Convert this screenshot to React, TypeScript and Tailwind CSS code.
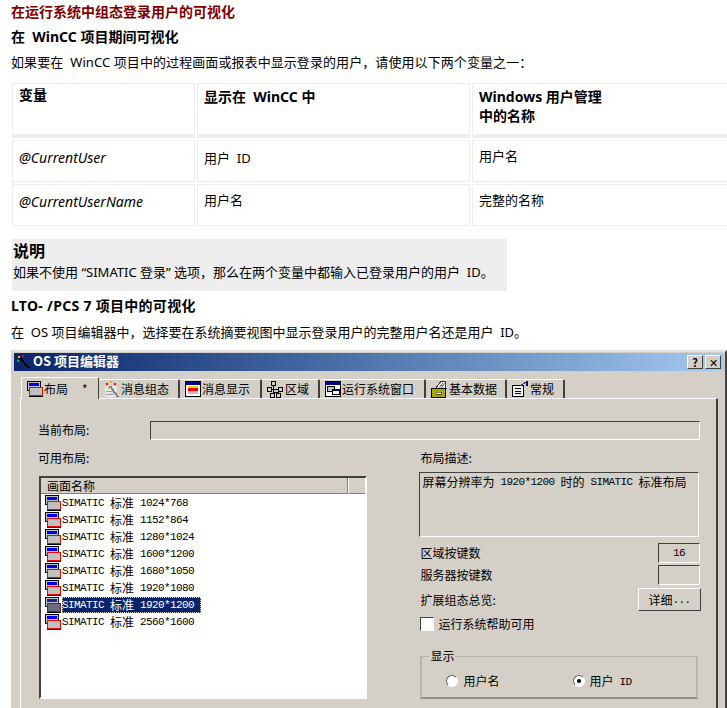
const BODY_FONT = "font-['Noto_Sans','Noto_Sans_CJK_SC',sans-serif]";
const DLG_FONT = "font-['Noto_Sans_CJK_SC','Liberation_Sans',sans-serif]";

const LAYOUTS = [
  "1024*768",
  "1152*864",
  "1280*1024",
  "1600*1200",
  "1680*1050",
  "1920*1080",
  "1920*1200",
  "2560*1600",
];

const TABS = [
  { label: "消息组态", width: "w-[81px]", icon: "wand" },
  { label: "消息显示", width: "w-[82px]", icon: "display" },
  { label: "区域", width: "w-[58px]", icon: "tree" },
  { label: "运行系统窗口", width: "w-[106px]", icon: "window" },
  { label: "基本数据", width: "w-[81px]", icon: "box" },
  { label: "常规", width: "w-[58px]", icon: "sheet" },
];

function LayoutIcon({ dim }: { dim?: boolean }) {
  return (
    <svg width="16" height="16" viewBox="0 0 16 16" shapeRendering="crispEdges" className="shrink-0">
      <rect x="0.5" y="0.5" width="13" height="9" fill="#c0c0c0" stroke={dim ? "#101840" : "#000"} />
      <rect x="2" y="2" width="10" height="3" fill={dim ? "#1a2a8a" : "#0000ff"} />
      <rect x="2" y="6" width="11" height="1" fill="#000" />
      <rect x="2.5" y="6.5" width="13" height="8" fill={dim ? "#6b6b80" : "#c0c0c0"} stroke={dim ? "#7a1a3a" : "#ff0000"} />
      <rect x="2" y="15" width="14" height="1" fill="#000" />
    </svg>
  );
}

function TabIcon({ name }: { name: string }) {
  if (name === "wand")
    return (
      <svg width="16" height="17" viewBox="0 0 16 17" shapeRendering="crispEdges" className="shrink-0">
        <rect x="1" y="5" width="12" height="11" fill="#e8e8e8" />
        <path d="M6 5l8 11" stroke="#808080" strokeWidth="2" />
        <rect x="2" y="2" width="2" height="2" fill="#ff0000" />
        <rect x="6" y="0" width="2" height="2" fill="#e8b800" />
        <rect x="10" y="2" width="2" height="2" fill="#ff0000" />
        <rect x="4" y="6" width="2" height="2" fill="#e8b800" />
        <rect x="2" y="10" width="8" height="1" fill="#a0a0a0" />
        <rect x="2" y="13" width="8" height="1" fill="#a0a0a0" />
      </svg>
    );
  if (name === "display")
    return (
      <svg width="16" height="16" viewBox="0 0 16 16" shapeRendering="crispEdges" className="shrink-0">
        <rect x="0.5" y="0.5" width="15" height="15" fill="#fff" stroke="#000" />
        <rect x="1" y="1" width="14" height="3" fill="#000080" />
        <rect x="3" y="5" width="10" height="2" fill="#e8d000" />
        <rect x="3" y="7" width="10" height="3" fill="#ff0000" />
        <rect x="3" y="10" width="10" height="3" fill="#c0c0c0" />
      </svg>
    );
  if (name === "tree")
    return (
      <svg width="17" height="17" viewBox="0 0 17 17" shapeRendering="crispEdges" className="shrink-0" fill="none" stroke="#000">
        <rect x="4.5" y="0.5" width="4" height="4" />
        <rect x="0.5" y="6.5" width="4" height="4" />
        <rect x="11.5" y="6.5" width="4" height="4" />
        <rect x="3.5" y="12.5" width="4" height="4" />
        <rect x="9.5" y="12.5" width="4" height="4" />
        <path d="M6.5 5v7M4.5 8.5h7M6.5 11.5h5v1" />
      </svg>
    );
  if (name === "window")
    return (
      <svg width="16" height="16" viewBox="0 0 16 16" shapeRendering="crispEdges" className="shrink-0">
        <rect x="0.5" y="0.5" width="15" height="15" fill="#fff" stroke="#000" />
        <rect x="1" y="1" width="14" height="3" fill="#000080" />
        <rect x="2.5" y="5.5" width="7" height="5" fill="#c0c0c0" stroke="#000" />
        <rect x="7.5" y="8.5" width="7" height="5" fill="#fff" stroke="#000" />
        <rect x="8" y="9" width="6" height="1" fill="#000080" />
      </svg>
    );
  if (name === "box")
    return (
      <svg width="17" height="18" viewBox="0 0 17 18" shapeRendering="crispEdges" className="shrink-0">
        <path d="M5 8L10 1h4l1 7z" fill="#e8e8e8" stroke="#404040" />
        <path d="M8 8l4-5M10 8l4-5" stroke="#808080" />
        <rect x="0.5" y="8.5" width="14" height="9" fill="#a8a800" stroke="#000" />
        <rect x="5" y="12" width="5" height="2" fill="#fff" stroke="#000" strokeWidth="0.5" />
      </svg>
    );
  return (
    <svg width="17" height="16" viewBox="0 0 17 16" shapeRendering="crispEdges" className="shrink-0">
      <rect x="0.5" y="4.5" width="11" height="11" fill="#f0f0f0" stroke="#000" />
      <path d="M3 7.5h6M3 10h6M3 12.5h6" stroke="#000" />
      <path d="M8 5l6-4" stroke="#404040" />
      <rect x="14" y="0" width="2" height="5" fill="#000080" />
    </svg>
  );
}

function Sunken({ className, children }: { className: string; children?: React.ReactNode }) {
  return (
    <div className={`border border-t-[#404040] border-l-[#404040] border-b-white border-r-white ${className}`}>
      {children}
    </div>
  );
}

function Cell({ className, children }: { className?: string; children?: React.ReactNode }) {
  return <div className={`border border-[#eeeeee] px-[6px] ${className ?? ""}`}>{children}</div>;
}

// the bitmap Latin of the dialog is tall and narrow, 6px per character
function Mono({ children }: { children: React.ReactNode }) {
  return <span className="font-['Liberation_Mono',monospace] text-[11px] tracking-[-0.6px]">{children}</span>;
}

function Radio({ checked }: { checked?: boolean }) {
  return (
    <span className="flex h-3 w-3 shrink-0 items-center justify-center rounded-full border border-t-[#606060] border-l-[#606060] border-b-white border-r-white bg-white">
      {checked && <span className="h-1 w-1 rounded-full bg-black" />}
    </span>
  );
}

export default function App() {
  return (
    <div className={`h-[708px] w-[727px] overflow-hidden whitespace-pre bg-white text-black ${BODY_FONT}`}>
      <div className="pl-[11px] pt-[2px]">
        <h1 className="h-[19px] text-[14px] font-bold leading-[19px] text-[#800000]">在运行系统中组态登录用户的可视化</h1>
        <h2 className="mt-[7px] h-[18px] text-[14px] font-bold leading-[18px]">在  WinCC 项目期间可视化</h2>
        <p className="mt-[7px] h-[18px] text-[13px] leading-[18px] tracking-[0.08px]">如果要在  WinCC 项目中的过程画面或报表中显示登录的用户，请使用以下两个变量之一：</p>
      </div>

      <div className="ml-[12px] mt-[12px] grid w-[730px] grid-cols-[183px_273px_270px] gap-x-[2px] text-[13px] leading-[18px]">
        <Cell className="h-[55px] border-b-[4px] pt-[2px] text-[14px] font-bold">变量</Cell>
        <Cell className="h-[55px] border-b-[4px] pt-[4px] text-[14px] font-bold">显示在  WinCC 中</Cell>
        <Cell className="h-[55px] border-b-[4px] pt-[3px] text-[14px] font-bold leading-[19px]">
          Windows 用户管理{"\n"}中的名称
        </Cell>
        <Cell className="mt-[2px] h-[42px] pt-[8px] text-[14px] italic">@CurrentUser</Cell>
        <Cell className="mt-[2px] h-[42px] pt-[8px]">用户  ID</Cell>
        <Cell className="mt-[2px] h-[42px] pt-[6px]">用户名</Cell>
        <Cell className="mt-[2px] h-[42px] pt-[8px] text-[14px] italic">@CurrentUserName</Cell>
        <Cell className="mt-[2px] h-[42px] pt-[6px]">用户名</Cell>
        <Cell className="mt-[2px] h-[42px] pt-[6px]">完整的名称</Cell>
      </div>

      <div className="ml-[12px] mt-[13px] h-[52px] w-[495px] bg-[#eeeeee] pl-[1px] pt-[2px]">
        <div className="h-[21px] text-[16px] font-bold leading-[21px]">说明</div>
        <p className="mt-[1px] h-[18px] text-[13px] leading-[18px]">如果不使用 “SIMATIC 登录” 选项，那么在两个变量中都输入已登录用户的用户  ID。</p>
      </div>

      <div className="pl-[11px]">
        <h2 className="mt-[6px] h-[18px] text-[14px] font-bold leading-[18px] tracking-[0.3px]">LTO- /PCS 7 项目中的可视化</h2>
        <p className="mt-[8px] h-[18px] text-[13px] leading-[18px]">在  OS 项目编辑器中，选择要在系统摘要视图中显示登录用户的完整用户名还是用户  ID。</p>
      </div>

      <div className={`ml-[11px] mt-[9px] h-[400px] w-[716px] border-2 border-[#d4d0c8] border-r-[#404040] border-t-[#e4e2dc] bg-[#d4d0c8] pt-px pl-px pr-px text-[12px] leading-[16px] ${DLG_FONT}`}>
        <div className="flex h-[18px] items-center bg-gradient-to-r from-[#0a246a] to-[#a6caf0] pl-[3px] pr-[3px]">
          <svg width="14" height="14" viewBox="0 0 14 14" shapeRendering="crispEdges" className="shrink-0">
            <path d="M3 3l9 10" stroke="#000" strokeWidth="2" />
            <rect x="1" y="1" width="2" height="2" fill="#e8d000" />
            <rect x="5" y="0" width="2" height="2" fill="#ff0000" />
            <rect x="0" y="5" width="2" height="2" fill="#00c000" />
          </svg>
          <span className="ml-[2px] pb-[2px] text-[13px] font-bold text-white">OS 项目编辑器</span>
          <div className="ml-auto flex gap-[2px]">
            <button className="flex h-[14px] w-[16px] items-center justify-center border border-t-white border-l-white border-b-[#404040] border-r-[#404040] bg-[#d4d0c8] text-[11px] font-bold leading-none">?</button>
            <button className="flex h-[14px] w-[16px] items-center justify-center border border-t-white border-l-white border-b-[#404040] border-r-[#404040] bg-[#d4d0c8] text-[11px] leading-none">✕</button>
          </div>
        </div>

        <div className="ml-[6px] mt-[6px] flex h-[21px] items-end pl-[1px]">
          <div className="z-10 -mb-px flex h-[22px] w-[78px] items-center gap-px rounded-t-[2px] border border-b-0 border-t-white border-l-white border-r-[#404040] bg-[#d4d0c8] pl-[5px]">
            <LayoutIcon />
            <span>布局</span>
            <span className="ml-[13px]">*</span>
          </div>
          {TABS.map((tab) => (
            <div
              key={tab.label}
              className={`flex h-[19px] items-center gap-px rounded-t-[2px] border-t border-r-2 border-t-white border-r-[#404040] pl-[5px] ${tab.width}`}
            >
              <TabIcon name={tab.icon} />
              <span>{tab.label}</span>
            </div>
          ))}
        </div>

        <div className="ml-[6px] h-[320px] w-[698px] border-l border-r-2 border-t border-l-white border-r-[#404040] border-t-white pl-[17px] pr-[16px] pt-[22px]">
          <div className="flex h-[19px] items-center">
            <span className="w-[112px] pb-[2px]">当前布局:</span>
            <Sunken className="h-[19px] w-[550px]" />
          </div>

          <div className="mt-[10px] flex">
            <div className="w-[383px]">
              <div className="flex h-[16px] items-center">可用布局:</div>
              <Sunken className="ml-px mt-[10px] h-[223px] w-[328px] border-2 bg-white">
                <div className="flex h-[16px] bg-[#d4d0c8] leading-[16px]">
                  <div className="w-[307px] border-b border-r border-b-[#808080] border-r-[#808080] pl-[6px]">画面名称</div>
                  <div className="flex-1 border-b border-l border-b-[#808080] border-l-white" />
                </div>
                <div className="pl-[4px]">
                  {LAYOUTS.map((size) => {
                    const selected = size === "1920*1200";
                    return (
                      <div key={size} className="flex h-[17px] items-center">
                        <LayoutIcon dim={selected} />
                        <div className={`ml-px flex h-[16px] items-center ${selected ? "w-[139px] bg-[#0a246a] text-white outline-1 -outline-offset-1 outline-dotted outline-[#d4d0c8]" : ""}`}>
                          <Mono>SIMATIC </Mono>
                          <span>标准</span>
                          <Mono> {size}</Mono>
                        </div>
                      </div>
                    );
                  })}
                </div>
              </Sunken>
            </div>

            <div className="flex w-[280px] flex-col">
              <div className="flex h-[16px] items-center">布局描述:</div>
              <Sunken className="-ml-px mt-[6px] h-[65px] w-[280px] pl-[2px] pt-[1px]">
                <span className="flex h-[16px] items-center">
                  <span>屏幕分辨率为</span>
                  <Mono> 1920*1200 </Mono>
                  <span>时的</span>
                  <Mono> SIMATIC </Mono>
                  <span>标准布局</span>
                </span>
              </Sunken>
              <div className="mt-[6px] flex h-[20px] items-center justify-between">
                <span>区域按键数</span>
                <Sunken className="flex h-[20px] w-[42px] items-center justify-center">
                  <Mono>16</Mono>
                </Sunken>
              </div>
              <div className="mt-[2px] flex h-[20px] items-center justify-between">
                <span>服务器按键数</span>
                <Sunken className="h-[20px] w-[42px]" />
              </div>
              <div className="mt-[3px] flex h-[23px] items-center justify-between">
                <span>扩展组态总览:</span>
                <button className="-mr-px flex h-[23px] w-[63px] items-center justify-center border border-t-white border-l-white border-b-[#404040] border-r-[#404040] bg-[#d4d0c8] text-[12px]">
                  <span>详细</span>
                  <Mono>...</Mono>
                </button>
              </div>
              <div className="mt-[5px] flex h-[15px] items-center gap-[4px]">
                <Sunken className="h-[14px] w-[14px] bg-white" />
                <span>运行系统帮助可用</span>
              </div>
              <div className="relative mt-[25px] h-[43px] w-[278px] border-2 border-t border-[#b8b4ac] border-b-[#909090] pt-[15px]">
                <span className="absolute -top-[8px] left-[7px] bg-[#d4d0c8] px-px leading-[14px]">显示</span>
                <div className="flex items-center">
                  <span className="ml-[24px] flex w-[127px] items-center gap-[5px]">
                    <Radio />
                    <span>用户名</span>
                  </span>
                  <span className="flex items-center gap-[4px]">
                    <Radio checked />
                    <span>用户</span>
                    <span className="ml-[2px]">
                      <Mono>ID</Mono>
                    </span>
                  </span>
                </div>
              </div>
            </div>
          </div>
        </div>
      </div>
    </div>
  );
}
